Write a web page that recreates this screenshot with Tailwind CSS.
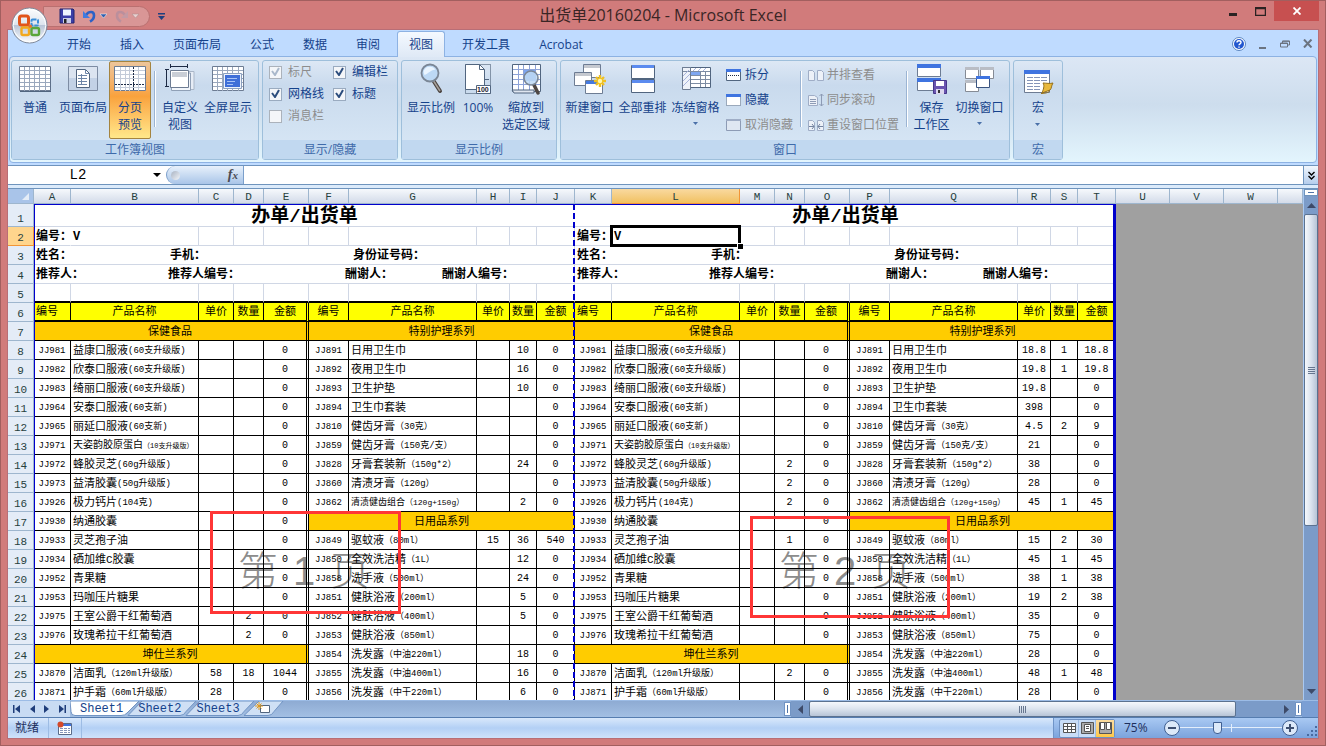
<!DOCTYPE html>
<html lang="zh-CN">
<head>
    <meta charset="UTF-8">
    <meta name="viewport" content="width=device-width, initial-scale=1.0">
    <title>出货单20160204 - Microsoft Excel</title>
    <script src="https://cdn.jsdelivr.net/npm/@tailwindcss/browser@4"></script>
</head>
<body class="h-screen overflow-hidden font-['Open_Sans','Noto_Sans_CJK_SC',sans-serif] text-xs text-[#15428b]">
<div class="h-full flex flex-col bg-[#d17b7b] border border-[#a25f5f] px-[6px] pb-[6px]">

    <!-- Title bar -->
    <header class="relative h-[28px] shrink-0 flex items-center">
        <div class="absolute left-[36px] top-[5px] w-[107px] h-[21px] rounded-r-full bg-[#d99696] border border-[#b97070]"></div>
        <div class="relative flex items-center pl-[52px] pt-[2px]">
            <button aria-label="保存" class="w-[16px] mr-[7px]"><svg width="16" height="16" viewBox="0 0 16 16"><path d="M1 1h13l1 1v13H1z" fill="#3b3fa8" stroke="#23256f"/><path d="M4 1.500h8v6H4z" fill="#eef4ff"/><path d="M4 10h8v5H4z" fill="#c9cde8"/><path d="M5 11h2.500v4H5z" fill="#222"/></svg></button>
            <button aria-label="撤消" class="w-[16px] mr-[2px]"><svg width="16" height="16" viewBox="0 0 16 16"><path d="M4 7C7 3 12 3 12 7.500c0 3-2 5-4 6" fill="none" stroke="#2d62c6" stroke-width="2.600"/><path d="M1 3v7h7z" fill="#3f7be0"/></svg></button>
            <button aria-label="撤消列表" class="w-[7px] mr-[6px]"><svg width="7" height="6" viewBox="0 0 7 6"><path d="M0 1h7L3.500 5z" fill="#2f5fae" stroke="#fff" stroke-width=".5"/></svg></button>
            <button aria-label="重复" class="w-[16px] mr-[3px]"><svg width="16" height="16" viewBox="0 0 16 16"><path d="M12 7C9 3 4 3 4 7.500c0 3 2 5 4 6" fill="none" stroke="#bb8f9c" stroke-width="2.600"/><path d="M15 3v7H8z" fill="#c39aa4"/></svg></button>
            <button aria-label="重复列表" class="w-[7px] mr-[19px]"><svg width="7" height="6" viewBox="0 0 7 6"><path d="M0 1h7L3.500 5z" fill="#e8d0d0" stroke="#a88" stroke-width=".5"/></svg></button>
            <button aria-label="自定义快速访问工具栏" class="w-[7px]"><svg width="7" height="9" viewBox="0 0 7 9"><path d="M0 1h7v1.500H0zM0 4h7L3.500 8z" fill="#1f3f7f"/></svg></button>
        </div>
        <h1 class="absolute inset-x-0 text-center text-[16px] leading-[28px] text-[#3a2525] pointer-events-none">出货单20160204 - Microsoft Excel</h1>
        <div class="ml-auto self-start flex items-center h-[20px]">
            <button aria-label="最小化" class="w-[27px] h-[20px] flex justify-center items-center"><svg width="9" height="12"><path d="M0 8h8v3H0z" fill="#2a2222"/></svg></button>
            <button aria-label="最大化" class="w-[27px] h-[20px] flex justify-center items-center"><svg width="11" height="9"><path d="M.5 1.500h10v7H.5zM0 .5h11" fill="none" stroke="#2a2222" stroke-width="1.500"/></svg></button>
            <button aria-label="关闭" class="w-[45px] h-[20px] flex justify-center items-center bg-[#c75050]"><svg width="8" height="8"><path d="M.5.5l7 7m0-7l-7 7" stroke="#fff" stroke-width="1.800"/></svg></button>
        </div>
        <button aria-label="Office 按钮" class="absolute left-[4px] top-[6px] z-20 w-[37px] h-[37px]">
            <svg width="37" height="37" viewBox="0 0 37 37"><defs><linearGradient id="orb" x2="0" y2="1"><stop offset="0" stop-color="#fdfdfd"/><stop offset=".48" stop-color="#dde4ee"/><stop offset=".5" stop-color="#b9c5d8"/><stop offset="1" stop-color="#fdfeff"/></linearGradient></defs><circle cx="18.500" cy="18.500" r="17.500" fill="url(#orb)" stroke="#7d8798" stroke-width="1"/><circle cx="18.500" cy="18.500" r="16.300" fill="none" stroke="#fff"/>
            <g fill="none"><rect x="8.500" y="9" width="9" height="9" rx="2" stroke="#e2541a" stroke-width="3"/><rect x="20.500" y="12.500" width="6.500" height="6" rx="1" stroke="#3b8ed8" stroke-width="2" stroke-dasharray="4 1"/><rect x="10.500" y="20.500" width="7.500" height="7.500" rx="1.500" stroke="#f2a81d" stroke-width="2.400"/><rect x="20.500" y="21" width="7.500" height="7" rx="1.500" stroke="#5aa63a" stroke-width="2.400"/></g><circle cx="19.200" cy="19.300" r="1.800" fill="#e8732a"/></svg>
        </button>
    </header>

    <main class="flex-1 min-h-0 flex flex-col border border-[#b86e76] bg-[#bfdbff]">
        <!-- Ribbon tabs -->
        <nav class="h-[27px] -mb-px relative z-10 shrink-0 flex items-end pl-[47px] gap-[5px] leading-[25px]">
            <a href="#" class="px-[12px]">开始</a>
            <a href="#" class="px-[12px]">插入</a>
            <a href="#" class="px-[12px]">页面布局</a>
            <a href="#" class="px-[12px]">公式</a>
            <a href="#" class="px-[12px]">数据</a>
            <a href="#" class="px-[12px]">审阅</a>
            <a href="#" class="px-[11px] rounded-t-[3px] border border-b-0 border-[#8db2e3] bg-linear-to-b from-[#f4f9ff] to-[#dfe9f6]">视图</a>
            <a href="#" class="px-[12px]">开发工具</a>
            <a href="#" class="px-[12px]">Acrobat</a>
            <div class="ml-auto self-center flex items-center gap-[13px] pr-[5px]">
                <button aria-label="帮助"><svg width="14" height="14" viewBox="0 0 14 14"><circle cx="7" cy="7" r="6.500" fill="#fff" stroke="#5b86c0"/><circle cx="7" cy="7" r="5" fill="#2257cf"/><path d="M5 5.500C5 3.200 9 3.200 9 5.500 9 7 7 6.800 7 8.300M7 9.500v1.300" fill="none" stroke="#fff" stroke-width="1.400"/></svg></button>
                <button aria-label="最小化工作簿"><svg width="8" height="10"><path d="M0 8h7v2H0z" fill="#6b7380"/></svg></button>
                <button aria-label="还原工作簿"><svg width="10" height="8"><path d="M2.500 3V1h7v4H7.500M.5 3h7v4h-7zM.5 3.500h7M2.500 1.300h7" fill="none" stroke="#6b7380"/></svg></button>
                <button aria-label="关闭工作簿"><svg width="10" height="9"><path d="M1 .5l7.500 8M8.500.5L1 8.500" stroke="#6b7380" stroke-width="2"/></svg></button>
            </div>
        </nav>

        <!-- Ribbon -->
        <section class="mx-px shrink-0 h-[107px] flex gap-[3px] items-start pl-px pt-[3px] rounded border border-[#8db2e3] bg-linear-to-b from-[#dce7f5] via-[#cddded] via-45% to-[#e3f5fd]">
            <div class="w-[248px] h-[100px] flex flex-col rounded-[3px] border border-[#9ebfdb] bg-linear-to-b from-[#dde8f5] via-[#c9daed] via-25% to-[#d9e8f6]">
                <div class="flex-1 flex items-start pl-px leading-[17px]">
                    <button class="w-[44px] flex flex-col items-center gap-[4px] pt-[2px]">
                        <svg width="32" height="32" viewBox="0 0 32 32"><path d="M.5 3.500h31v24H.5z" fill="#fff" stroke="#6d7c93"/><path d="M1 7.500h30M1 11.500h30M1 15.500h30M1 19.500h30M1 23.500h30M5.500 4v24M10.500 4v24M15.500 4v24M20.500 4v24M26.500 4v24" stroke="#9aa8bd"/><path d="M1 28.500h31V4" stroke="#51657f" fill="none"/></svg>
                        <span>普通</span>
                    </button>
                    <button class="w-[52px] flex flex-col items-center gap-[4px] pt-[2px]">
                        <svg width="32" height="32" viewBox="0 0 32 32"><path d="M1.500 3.500h29v24h-29z" fill="#dbe4f0" stroke="#7d8ca3"/><path d="M2 15h28v12H2z" fill="#c3d2e6"/><path d="M9.500 6.500h9l4 4v14h-13z" fill="#fff" stroke="#51657f"/><path d="M18.500 6.500v4h4M11 12.500h9M11 15.500h9M11 18.500h9M11 21.500h9M14.500 11v11" stroke="#6e86a8" fill="none"/></svg>
                        <span class="whitespace-nowrap">页面布局</span>
                    </button>
                    <button class="w-[42px] h-[78px] flex flex-col items-center gap-[4px] pt-px border border-[#a5843f] rounded-[2px] bg-linear-to-b from-[#ecc59a] via-[#f9a23c] via-45% to-[#ffe88a]">
                        <svg width="32" height="32" viewBox="0 0 32 32" class="shrink-0"><path d="M.5 3.500h31v24H.5z" fill="#fff" stroke="#6d7c93"/><path d="M1 7.500h30M1 11.500h30M1 15.500h30M1 24.500h30M6.500 4v24M11.500 4v24M15.500 4v24M24.500 4v24" stroke="#c3cbd8"/><path d="M19.500 4v24M1 21.500h30" stroke="#1d2b45" stroke-dasharray="2 1"/></svg>
                        <span>分页<br>预览</span>
                    </button>
                    <div class="w-[2px] h-[56px] mt-[10px] mx-[3px] bg-[#9bb4d3] border-r border-white"></div>
                    <button class="w-[42px] flex flex-col items-center gap-[4px] pt-[2px]">
                        <svg width="32" height="32" viewBox="0 0 32 32"><path d="M9 8.500h21v18H9z" fill="#e7edf6" stroke="#a9b6c8"/><path d="M7.500 10h19v17.500h-19z" fill="#f2f6fb" stroke="#90a0b6"/><path d="M6.500 7.500h18v17h-18z" fill="#fff" stroke="#6d7c93"/><path d="M8 9h15v5H8z" fill="#c9ced6"/><path d="M6 3.500h18M6.500 1v4M23.500 1v4M2.500 6v18M1 6.500h4M1 23.500h4" stroke="#1d2b45" fill="none"/></svg>
                        <span class="whitespace-nowrap">自定义<br>视图</span>
                    </button>
                    <button class="w-[54px] flex flex-col items-center gap-[4px] pt-[2px]">
                        <svg width="32" height="32" viewBox="0 0 32 32"><path d="M.5 3.500h31v24H.5z" fill="#fff" stroke="#6d7c93"/><path d="M1 7.500h30M1 11.500h30M1 15.500h30M1 19.500h30M1 23.500h30M5.500 4v24M10.500 4v24M15.500 4v24M20.500 4v24M26.500 4v24" stroke="#9aa8bd"/><path d="M11.500 10.500h18v15h-18z" fill="#eef3fb" stroke="#8ba0bf"/><path d="M13 12h15v12H13z" fill="#3f6fd8"/><path d="M15 15.500h10M15 18.500h8M15 21.500h6" stroke="#a9c4f7"/></svg>
                        <span class="whitespace-nowrap">全屏显示</span>
                    </button>
                </div>
                <div class="h-[19px] leading-[19px] text-center bg-[#c1d8f0] text-[#3e6aaa]">工作簿视图</div>
            </div>

            <div class="w-[136px] h-[100px] flex flex-col rounded-[3px] border border-[#9ebfdb] bg-linear-to-b from-[#dde8f5] via-[#c9daed] via-25% to-[#d9e8f6]">
                <div class="flex-1 grid grid-cols-[64px_1fr] auto-rows-[22px] pl-[6px]">
                    <label class="relative flex items-center gap-[6px] text-[#8d8d8d]"><input type="checkbox" checked disabled class="peer appearance-none w-[13px] h-[13px] border border-[#abb2bb] bg-[#f4f6f9]"><svg class="absolute left-[2px] top-[6px] hidden peer-checked:block" width="9" height="9"><path d="M1 4l3 4 4-7" fill="none" stroke="#a9b8cb" stroke-width="2"/></svg>标尺</label>
                    <label class="relative flex items-center gap-[6px]"><input type="checkbox" checked class="peer appearance-none w-[13px] h-[13px] border border-[#9aabc0] bg-[#f4f6f9]"><svg class="absolute left-[2px] top-[6px] hidden peer-checked:block" width="9" height="9"><path d="M1 4l3 4 4-7" fill="none" stroke="#2c4d7d" stroke-width="2"/></svg>编辑栏</label>
                    <label class="relative flex items-center gap-[6px]"><input type="checkbox" checked class="peer appearance-none w-[13px] h-[13px] border border-[#9aabc0] bg-[#f4f6f9]"><svg class="absolute left-[2px] top-[6px] hidden peer-checked:block" width="9" height="9"><path d="M1 4l3 4 4-7" fill="none" stroke="#2c4d7d" stroke-width="2"/></svg>网格线</label>
                    <label class="relative flex items-center gap-[6px]"><input type="checkbox" checked class="peer appearance-none w-[13px] h-[13px] border border-[#9aabc0] bg-[#f4f6f9]"><svg class="absolute left-[2px] top-[6px] hidden peer-checked:block" width="9" height="9"><path d="M1 4l3 4 4-7" fill="none" stroke="#2c4d7d" stroke-width="2"/></svg>标题</label>
                    <label class="relative flex items-center gap-[6px] text-[#8d8d8d]"><input type="checkbox" disabled class="appearance-none w-[13px] h-[13px] border border-[#abb2bb] bg-[#f4f6f9]">消息栏</label>
                </div>
                <div class="h-[19px] leading-[19px] text-center bg-[#c1d8f0] text-[#3e6aaa]">显示/隐藏</div>
            </div>

            <div class="w-[156px] h-[100px] flex flex-col rounded-[3px] border border-[#9ebfdb] bg-linear-to-b from-[#dde8f5] via-[#c9daed] via-25% to-[#d9e8f6]">
                <div class="flex-1 flex items-start pl-px leading-[17px]">
                    <button class="w-[56px] flex flex-col items-center gap-[4px] pt-[2px]">
                        <svg width="32" height="32" viewBox="0 0 32 32"><path d="M18 17l7 11" stroke="#4d4642" stroke-width="4" stroke-linecap="round"/><path d="M18 17l7 11" stroke="#a8a29c" stroke-width="1.500"/><circle cx="15" cy="10" r="8.500" fill="#bdd9f5" stroke="#7b8796" stroke-width="1.800"/><path d="M8.500 9a6.500 6.500 0 0 1 12-2c-4-1-7 4-11 5z" fill="#eaf5ff"/></svg>
                        <span>显示比例</span>
                    </button>
                    <button class="w-[38px] flex flex-col items-center gap-[4px] pt-[2px]">
                        <svg width="32" height="32" viewBox="0 0 32 32"><path d="M3.500 1.500h25v29h-25z" fill="none" stroke="#33465f" stroke-dasharray="1 1"/><path d="M3.500 1.500h14l5 5v20h-19z" fill="#fff" stroke="#51657f"/><path d="M17.500 1.500v5h5M23 16.500h4" fill="none" stroke="#51657f"/><path d="M14.500 22.500h14v8h-14z" fill="#fff" stroke="#51657f"/><text x="15" y="29" font-size="7" font-weight="bold" font-family="Liberation Sans" fill="#223">100</text></svg>
                        <span>100%</span>
                    </button>
                    <button class="w-[58px] flex flex-col items-center gap-[4px] pt-[2px]">
                        <svg width="32" height="32" viewBox="0 0 32 32"><path d="M2.500 1.500h28v27h-28z" fill="#fff" stroke="#51657f"/><path d="M14 7h11v11H14z" fill="#7ea6f0"/><path d="M3 6.500h27M3 11.500h27M3 16.500h27M3 21.500h27M8.500 2v26M13.500 2v26M19.500 2v26M25.500 2v26" stroke="#8da3d8"/><path d="M2 27h22v3H4z" fill="#dfe6f0" stroke="#51657f"/><path d="M24 22l4 8" stroke="#4d4642" stroke-width="3.500" stroke-linecap="round"/><circle cx="21" cy="15" r="7" fill="#bdd9f5" fill-opacity=".85" stroke="#7b8796" stroke-width="1.600"/></svg>
                        <span>缩放到<br>选定区域</span>
                    </button>
                </div>
                <div class="h-[19px] leading-[19px] text-center bg-[#c1d8f0] text-[#3e6aaa]">显示比例</div>
            </div>

            <div class="w-[450px] h-[100px] flex flex-col rounded-[3px] border border-[#9ebfdb] bg-linear-to-b from-[#dde8f5] via-[#c9daed] via-25% to-[#d9e8f6]">
                <div class="flex-1 flex items-start pl-[2px] leading-[17px]">
                    <button class="w-[53px] flex flex-col items-center gap-[4px] pt-[2px]">
                        <svg width="32" height="32" viewBox="0 0 32 32"><g fill="#fff" stroke="#6d7c93"><path d="M9.500 1.500h17v13h-17z"/><path d="M.5 9.500h17v13H.5z"/><path d="M11.500 17.500h17v13h-17z"/></g><path d="M10 2h16v3H10zM1 10h16v3H1z" fill="#c5c9d0"/><path d="M12 18h16v3H12z" fill="#4579e0"/><path d="M26 12v12M20 18h12M22 14l8 8M30 14l-8 8" stroke="#f0c020" stroke-width="2.400"/><circle cx="26" cy="18" r="2.200" fill="#fff7b0"/></svg>
                        <span>新建窗口</span>
                    </button>
                    <button class="w-[53px] flex flex-col items-center gap-[4px] pt-[2px]">
                        <svg width="32" height="32" viewBox="0 0 32 32"><path d="M4.500 2.500h23v13h-23zM4.500 16.500h23v13h-23z" fill="#fff" stroke="#51657f"/><path d="M5 2h22v3H5zM5 17h22v3H5z" fill="#5b8bef"/></svg>
                        <span>全部重排</span>
                    </button>
                    <button class="w-[53px] flex flex-col items-center gap-[4px] pt-[2px]">
                        <svg width="32" height="32" viewBox="0 0 32 32"><path d="M2.500 4.500h28v20h-28z" fill="#fff" stroke="#51657f"/><path d="M2.500 4.500h8v22h-8z" fill="#eef2f9" stroke="#6d7c93"/><path d="M11 9h10v4H11z" fill="#7ea6f0"/><path d="M3 8.500h27M11 12.500h19M11 16.500h19M11 20.500h19M20.500 9v15M25.500 9v15" stroke="#7d8ca3"/><path d="M3 13l6-6M3 18l7-7M3 23l7-7M13 8l3-3M18 8l3-3M23 8l3-3" stroke="#a7b3dd"/></svg>
                        <span class="flex flex-col items-center">冻结窗格<svg class="mt-[6px]" width="5" height="4"><path d="M0 0h5L2.500 3z" fill="#4a70a8"/></svg></span>
                    </button>
                    <div class="w-[76px] grid auto-rows-[25px] pt-px pl-[4px]">
                        <button class="flex items-center gap-[3px] whitespace-nowrap"><svg width="16" height="14"><path d="M.5 1.500h14v11H.5z" fill="#fff" stroke="#51657f"/><path d="M0 1h15v3H0z" fill="#3f74e0"/><path d="M2 7.500h12" stroke="#1d2b45" stroke-dasharray="1 1"/></svg>拆分</button>
                        <button class="flex items-center gap-[3px] whitespace-nowrap"><svg width="16" height="14"><path d="M.5 1.500h14v11H.5z" fill="#fff" stroke="#51657f" stroke-dasharray="1 1"/><path d="M0 1h15v3H0z" fill="#3f74e0"/></svg>隐藏</button>
                        <button class="flex items-center gap-[3px] whitespace-nowrap text-[#8d8d8d]"><svg width="16" height="14"><path d="M.5 1.500h14v11H.5z" fill="#dfe7f2" stroke="#8d9bb5"/><path d="M0 1h15v2H0z" fill="#9fadc6"/></svg>取消隐藏</button>
                    </div>
                    <div class="w-[2px] h-[56px] mt-[10px] mx-[2px] bg-[#9bb4d3] border-r border-white"></div>
                    <div class="w-[100px] grid auto-rows-[25px] pt-px pl-[4px]">
                        <button class="flex items-center gap-[3px] whitespace-nowrap text-[#8d8d8d]"><svg width="16" height="14"><path d="M.5 2.500h4l2 2v8h-6zM9.500 2.500h4l2 2v8h-6z" fill="#edf1f8" stroke="#9fadc6"/></svg>并排查看</button>
                        <button class="flex items-center gap-[3px] whitespace-nowrap text-[#8d8d8d]"><svg width="16" height="14"><path d="M.5 2.500h6l3 2v8h-9z" fill="#edf1f8" stroke="#9fadc6"/><path d="M2 6.500h6M2 8.500h6M2 10.500h6M13.500 1v12M11.500 3l2-2 2 2M11.500 11l2 2 2-2" fill="none" stroke="#8d9bb5"/></svg>同步滚动</button>
                        <button class="flex items-center gap-[3px] whitespace-nowrap text-[#8d8d8d]"><svg width="16" height="14"><path d="M.5 2.500h4l2 2v8h-6zM9.500 2.500h4l2 2v8h-6z" fill="#edf1f8" stroke="#9fadc6"/><path d="M1 8.500h5M4 6l2 2.500L4 11M15 8.500h-5M12 6l-2 2.500 2 2.500" fill="none" stroke="#7383a0"/></svg>重设窗口位置</button>
                    </div>
                    <div class="w-[2px] h-[56px] mt-[10px] mx-[2px] bg-[#9bb4d3] border-r border-white"></div>
                    <button class="w-[43px] flex flex-col items-center gap-[4px] pt-[2px]">
                        <svg width="32" height="32" viewBox="0 0 32 32"><path d="M1.500 1.500h23v12h-23zM1.500 15.500h23v12h-23z" fill="#fff" stroke="#6d7c93"/><path d="M1 1h24v4H1zM1 15h24v4H1z" fill="#3f74e0"/><path d="M17.500 17.500h13v13h-13z" fill="#6b55b0" stroke="#46378a"/><path d="M20 18h8v5h-8z" fill="#fff"/><path d="M20 26h8v5h-8z" fill="#ddd8ef"/><path d="M22 27h2v3h-2z" fill="#333"/></svg>
                        <span class="whitespace-nowrap">保存<br>工作区</span>
                    </button>
                    <button class="w-[53px] flex flex-col items-center gap-[4px] pt-[2px]">
                        <svg width="32" height="32" viewBox="0 0 32 32"><g fill="#fff" stroke="#858b95"><path d="M1.500 4.500h13v11h-13zM16.500 4.500h13v11h-13zM1.500 17.500h13v11h-13z"/></g><path d="M1 4h14v3H1zM16 4h14v3H16zM1 17h14v3H1z" fill="#b9bdc5"/><path d="M12.500 13.500h13v11h-13z" fill="#fff" stroke="#3a5480"/><path d="M12 13h14v3H12z" fill="#3f74e0"/></svg>
                        <span class="flex flex-col items-center whitespace-nowrap">切换窗口<svg class="mt-[6px]" width="5" height="4"><path d="M0 0h5L2.500 3z" fill="#4a70a8"/></svg></span>
                    </button>
                </div>
                <div class="h-[19px] leading-[19px] text-center bg-[#c1d8f0] text-[#3e6aaa]">窗口</div>
            </div>

            <div class="w-[50px] h-[100px] flex flex-col rounded-[3px] border border-[#9ebfdb] bg-linear-to-b from-[#dde8f5] via-[#c9daed] via-25% to-[#d9e8f6]">
                <button class="flex-1 flex flex-col items-center gap-[4px] pt-[2px] leading-[17px]">
                    <svg width="32" height="32" viewBox="0 0 32 32"><path d="M2.500 7.500h25v22h-25z" fill="#fff" stroke="#6d7c93"/><path d="M2 7h26v4H2z" fill="#3f74e0"/><path d="M5 14.500h6M12 14.500h6M19 14.500h6M5 17.500h6M12 17.500h6M19 17.500h6M5 20.500h6M12 20.500h6M5 23.500h6M12 23.500h6M5 26.500h6M12 26.500h6" stroke="#8494b8"/><path d="M21 20c3 0 7 1 10 0-2 3-1 5-3 7l-8 3c1-3 3-7 1-10z" fill="#e9b93d" stroke="#94701b"/><path d="M19 30.500c3 0 6 0 9-3" fill="none" stroke="#94701b"/></svg>
                    <span class="flex flex-col items-center">宏<svg class="mt-[7px]" width="5" height="4"><path d="M0 0h5L2.500 3z" fill="#4a70a8"/></svg></span>
                </button>
                <div class="h-[19px] leading-[19px] text-center bg-[#c1d8f0] text-[#3e6aaa]">宏</div>
            </div>
        </section>

        <!-- Formula bar -->
        <div class="shrink-0 mt-[2px] h-[20px] flex bg-white border-y border-[#6f94bd] text-black">
            <input aria-label="名称框" value="L2" class="w-[140px] text-center font-['Liberation_Mono',monospace] text-[14px] outline-none">
            <button aria-label="名称列表" class="w-[18px] flex justify-center items-center"><svg width="8" height="5"><path d="M0 0h8L4 4z"/></svg></button>
            <div class="w-[78px] flex items-center justify-between pl-[4px] pr-[5px] rounded-l-full border border-y-0 border-[#7b9fcb] bg-linear-to-b from-[#e8f1fb] to-[#a9c5e8]">
                <span class="w-[9px] h-[9px] rounded-full bg-linear-to-br from-[#a9b3c2] to-[#f3f6fa]"></span>
                <button class="font-['Liberation_Serif',serif] italic font-bold text-[14px] leading-[18px] text-[#4b4b55]">f<span class="text-[11px]">x</span></button>
            </div>
            <input aria-label="编辑栏" class="flex-1 outline-none">
            <button aria-label="展开编辑栏" class="w-[15px] flex justify-center items-center border-l border-[#6f94bd] bg-linear-to-b from-[#f2f7fd] to-[#b5cdec]"><svg width="7" height="9"><path d="M.5 1l3 3 3-3M.5 5l3 3 3-3" fill="none" stroke="#000" stroke-width="1.400"/></svg></button>
        </div>
        <div class="shrink-0 h-[4px] bg-[#dcebfb] border-b border-[#6f94bd]"></div>

        <!-- Worksheet -->
        <div class="flex-1 min-h-0 flex bg-[#a0a0a0]">
            <div class="relative flex-1 overflow-hidden">
                <div class="absolute left-[26px] top-[15px] w-[1082px] bottom-0 bg-white"></div>
                <div class="absolute left-[230px] top-[352px] flex gap-[15px] leading-[60px] text-[40px] text-[#8c8c8c] font-light font-['Liberation_Sans','Noto_Sans_CJK_SC',sans-serif]"><span>第</span><span>1</span><span>页</span></div>
                <div class="absolute left-[771px] top-[352px] flex gap-[15px] leading-[60px] text-[40px] text-[#8c8c8c] font-light font-['Liberation_Sans','Noto_Sans_CJK_SC',sans-serif]"><span>第</span><span>2</span><span>页</span></div>
                <table class="relative table-fixed w-full border-separate border-spacing-0 whitespace-nowrap text-black text-[11px] font-['Liberation_Mono','Noto_Sans_CJK_SC',monospace]">
                    <colgroup id="cols"></colgroup>
                    <thead><tr id="letters"></tr></thead>
                    <tbody id="cells"></tbody>
                </table>
                <!-- print area edge and page break -->
                <div class="absolute left-[26px] top-[15px] w-[1082px] bottom-0 border-t border-l border-r-[3px] border-[#0000cc]"></div>
                <div class="absolute left-[565px] top-[15px] bottom-0 w-[2px] bg-[repeating-linear-gradient(#0000cc_0_6px,transparent_6px_9px)]"></div>
                <!-- active cell -->
                <div class="absolute left-[602px] top-[36px] w-[131px] h-[22px] border-[3px] border-black"></div>
                <div class="absolute left-[729px] top-[54px] w-[6px] h-[6px] bg-black border-t border-l border-white"></div>
                <div class="absolute left-[202px] top-[322px] w-[191px] h-[103px] border-[3px] border-[#ff3636]"></div>
                <div class="absolute left-[742px] top-[327px] w-[200px] h-[102px] border-[3px] border-[#ff3636]"></div>
            </div>
            <div class="w-[15px] flex flex-col border-l border-[#a9c8f0] bg-[#7b9bc8]">
                <div class="h-[7px] mb-px bg-white border border-[#6f94bd]"><div class="mt-[2px] mx-[3px] h-px bg-[#4f74a8]"></div></div>
                <button aria-label="向上滚动" class="h-[17px] flex justify-center items-center"><svg width="9" height="5"><path d="M0 5h9L4.500 0z" fill="#3d4a68"/></svg></button>
                <div class="h-[312px] flex flex-col justify-center items-center gap-px rounded-[2px] border border-[#5b7290] bg-linear-to-r from-[#f5f8fc] via-[#dbe3ee] to-[#b7c4d6]">
                    <span class="w-[7px] h-px bg-[#66768f]"></span><span class="w-[7px] h-px bg-[#66768f]"></span><span class="w-[7px] h-px bg-[#66768f]"></span><span class="w-[7px] h-px bg-[#66768f]"></span>
                </div>
                <button aria-label="向下滚动" class="mt-auto h-[17px] flex justify-center items-center"><svg width="9" height="5"><path d="M0 0h9L4.500 5z" fill="#3d4a68"/></svg></button>
            </div>
        </div>

        <!-- Sheet tabs and horizontal scroll bar -->
        <div class="shrink-0 h-[17px] flex border-t border-[#9cbce6] bg-linear-to-b from-[#8eabd3] to-[#a3bfe3]">
            <div class="w-[776px] relative flex items-stretch">
                <div class="w-[62px] flex justify-around items-center bg-[#c8dbf3]">
                    <button aria-label="第一张"><svg width="8" height="8"><path d="M0 0h1.500v8H0zM7 0v8L2 4z" fill="#1f3d7a"/></svg></button>
                    <button aria-label="上一张"><svg width="5" height="8"><path d="M5 0v8L0 4z" fill="#1f3d7a"/></svg></button>
                    <button aria-label="下一张"><svg width="5" height="8"><path d="M0 0v8l5-4z" fill="#1f3d7a"/></svg></button>
                    <button aria-label="最后一张"><svg width="8" height="8"><path d="M6.500 0H8v8H6.500zM1 0v8l5-4z" fill="#1f3d7a"/></svg></button>
                </div>
                <svg class="absolute left-[62px] top-0" width="220" height="15" viewBox="0 0 220 15"><g fill="#cfe0f5" stroke="#7194c4"><path d="M174 14.500h24q4 0 6-4L213 0h-24z"/><path d="M116 14.500h52q4 0 6-4L184 0h-54z"/><path d="M58 14.500h52q4 0 6-4L126 0H72z"/></g><path d="M0 0h69L57 12q-2 2.500-6 2.500H5q-4 0-4-4z" fill="#fff" stroke="#7194c4"/><path d="M190.500 4.500h9v7h-9z" fill="#fff" stroke="#51657f"/><path d="M189 1v8M185 5h8M186.500 2.500l5 5M191.500 2.500l-5 5" stroke="#e09a20"/></svg>
                <div class="relative pl-[10px] flex gap-[15px] leading-[16px] font-['Liberation_Mono',monospace]">
                    <a href="#">Sheet1</a><a href="#">Sheet2</a><a href="#">Sheet3</a>
                </div>
            </div>
            <div class="w-[7px] my-px bg-white border border-[#7194c4] flex justify-center items-center"><i class="w-px h-[8px] bg-[#4f74a8]"></i></div>
            <button aria-label="向左滚动" class="w-[18px] flex justify-center items-center bg-[#7b9bc8]"><svg width="5" height="9"><path d="M5 0v9L0 4.500z" fill="#3d4a68"/></svg></button>
            <div class="flex-1 flex bg-[#7b9bc8]">
                <div class="w-[427px] flex justify-center items-center gap-px rounded-[2px] border border-[#5b7290] bg-linear-to-b from-[#f5f8fc] via-[#dbe3ee] to-[#b7c4d6]">
                    <span class="w-px h-[7px] bg-[#66768f]"></span><span class="w-px h-[7px] bg-[#66768f]"></span><span class="w-px h-[7px] bg-[#66768f]"></span><span class="w-px h-[7px] bg-[#66768f]"></span>
                </div>
            </div>
            <button aria-label="向右滚动" class="w-[18px] flex justify-center items-center bg-[#7b9bc8]"><svg width="5" height="9"><path d="M0 0v9l5-4.500z" fill="#3d4a68"/></svg></button>
            <div class="w-[7px] my-px bg-white border border-[#7194c4] flex justify-center items-center"><i class="w-px h-[8px] bg-[#4f74a8]"></i></div>
            <div class="w-[16px] bg-[#7b9fd4]"></div>
        </div>

        <!-- Status bar -->
        <footer class="shrink-0 h-[21px] flex items-center border-t border-[#567db0] bg-linear-to-b from-[#d9e8fb] via-[#b3d0f5] via-50% to-[#cfe2fa] text-[#1e2f5c]">
            <span class="w-[40px] pl-[7px]">就绪</span>
            <span class="w-[34px] h-full flex justify-center items-center border-x border-[#9dbce4]"><svg width="16" height="15"><path d="M1.500 2.500h13v11h-13z" fill="#fff" stroke="#5a6b88"/><path d="M2 3h12v2H2z" fill="#3f74e0"/><path d="M3 7.500h10M3 9.500h10M3 11.500h10" stroke="#8494b8" stroke-dasharray="3 1"/><circle cx="3.500" cy="3.500" r="3" fill="#d4492a"/></svg></span>
            <div class="ml-auto h-full flex items-center pl-[5px] border-l border-[#6f94c8] bg-linear-to-b from-[#a9c9f3] to-[#7ba3dc]">
                <div class="flex rounded-[2px] border border-[#6d90c2] bg-[#c9ddf6]">
                    <button aria-label="普通" class="w-[18px] h-[17px] flex justify-center items-center"><svg width="13" height="10"><path d="M.5.5h12v9H.5zM0 3.500h13M0 6.500h13M4.500 0v10M8.500 0v10" fill="#fff" stroke="#555"/></svg></button>
                    <button aria-label="页面布局" class="w-[18px] h-[17px] flex justify-center items-center border-x border-[#9dbce4]"><svg width="13" height="12"><path d="M.5.5h12v11H.5z" fill="#aaa" stroke="#555"/><path d="M3.500 2.500h6v7h-6zM5 4.500h3M5 6.500h3" fill="#fff" stroke="#555"/></svg></button>
                    <button aria-label="分页预览" class="w-[18px] h-[17px] flex justify-center items-center bg-linear-to-b from-[#fbdca0] to-[#ffc844]"><svg width="13" height="12"><path d="M.5.5h12v11H.5z" fill="#aaa" stroke="#555"/><path d="M1.500.5h4v7h-4zM7.500.5h4v7h-4z" fill="#fff" stroke="#555"/></svg></button>
                </div>
                <span class="w-[49px] pl-[9px]">75%</span>
                <button aria-label="缩小"><svg width="16" height="16"><circle cx="8" cy="8" r="7.500" fill="#dce9f9" stroke="#3f5f92"/><path d="M4 8h8" stroke="#3d4f70" stroke-width="2"/></svg></button>
                <div class="relative w-[102px] h-[16px] flex items-center">
                    <div class="absolute inset-x-0 top-[7px] h-px bg-[#e3eefb]"></div>
                    <div class="absolute left-[51px] top-[4px] w-px h-[8px] bg-[#e3eefb]"></div>
                    <input type="range" aria-label="显示比例" min="0" max="100" value="36" class="relative w-full h-[16px] appearance-none bg-transparent [&::-webkit-slider-thumb]:appearance-none [&::-webkit-slider-thumb]:w-[9px] [&::-webkit-slider-thumb]:h-[12px] [&::-webkit-slider-thumb]:rounded-b-[4px] [&::-webkit-slider-thumb]:border [&::-webkit-slider-thumb]:border-[#3f5f92] [&::-webkit-slider-thumb]:bg-[#dce9f9]">
                </div>
                <button aria-label="放大"><svg width="16" height="16"><circle cx="8" cy="8" r="7.500" fill="#dce9f9" stroke="#3f5f92"/><path d="M4 8h8M8 4v8" stroke="#3d4f70" stroke-width="2"/></svg></button>
                <svg class="ml-[9px] mt-[6px]" width="11" height="11"><path d="M8 0h2v2H8zM4 4h2v2H4zM8 4h2v2H8zM0 8h2v2H0zM4 8h2v2H4zM8 8h2v2H8z" fill="#4a6ba0"/></svg>
            </div>
        </footer>
    </main>
</div>

<script>
    var pageWidths = [37, 128, 35, 30, 45, 40, 128, 33, 27, 38];
    var widths = [26].concat(pageWidths, pageWidths, [54, 54, 54]);

    // [code, name, note, page 1: price, qty, amount, page 2: price, qty, amount]; a plain string is a section band
    var leftRows = [
        ['JJ981', '益康口服液', '(60支升级版)', '', '', 0, '', '', 0],
        ['JJ982', '欣泰口服液', '(60支升级版)', '', '', 0, '', '', 0],
        ['JJ983', '绮丽口服液', '(60支升级版)', '', '', 0, '', '', 0],
        ['JJ964', '安泰口服液', '(60支新)', '', '', 0, '', '', 0],
        ['JJ965', '丽延口服液', '(60支新)', '', '', 0, '', '', 0],
        ['JJ971', '天姿韵胶原蛋白', '（10支升级版）', '', '', 0, '', '', 0],
        ['JJ972', '蜂胶灵芝', '(60g升级版)', '', '', 0, '', 2, 0],
        ['JJ973', '益清胶囊', '(50g升级版)', '', '', 0, '', 2, 0],
        ['JJ926', '极力钙片', '(104克)', '', '', 0, '', 2, 0],
        ['JJ930', '纳通胶囊', '', '', '', 0, '', '', 0],
        ['JJ933', '灵芝孢子油', '', '', '', 0, '', 1, 0],
        ['JJ934', '硒加维C胶囊', '', '', '', 0, '', '', 0],
        ['JJ952', '青果糖', '', '', '', 0, '', '', 0],
        ['JJ953', '玛咖压片糖果', '', '', '', 0, '', '', 0],
        ['JJ975', '王室公爵干红葡萄酒', '', '', 2, 0, '', '', 0],
        ['JJ976', '玫瑰希拉干红葡萄酒', '', '', 2, 0, '', '', 0],
        '坤仕兰系列',
        ['JJ870', '洁面乳', '（120ml升级版）', 58, 18, 1044, '', 2, 0],
        ['JJ871', '护手霜', '（60ml升级版）', 28, '', 0, '', '', 0]
    ];
    var rightRows = [
        ['JJ891', '日用卫生巾', '', '', 10, 0, 18.8, 1, 18.8],
        ['JJ892', '夜用卫生巾', '', '', 16, 0, 19.8, 1, 19.8],
        ['JJ893', '卫生护垫', '', '', 10, 0, 19.8, '', 0],
        ['JJ894', '卫生巾套装', '', '', '', 0, 398, '', 0],
        ['JJ810', '健齿牙膏', '（30克）', '', '', 0, 4.5, 2, 9],
        ['JJ859', '健齿牙膏', '（150克/支）', '', '', 0, 21, '', 0],
        ['JJ828', '牙膏套装新', '（150g*2）', '', 24, 0, 38, '', 0],
        ['JJ860', '清渍牙膏', '（120g）', '', '', 0, 28, '', 0],
        ['JJ862', '清渍健齿组合', '（120g+150g）', '', 2, 0, 45, 1, 45],
        '日用品系列',
        ['JJ849', '驱蚊液', '（80ml）', 15, 36, 540, 15, 2, 30],
        ['JJ850', '全效洗洁精', '（1L）', '', 12, 0, 45, 1, 45],
        ['JJ858', '洗手液', '（500ml）', '', 24, 0, 38, 1, 38],
        ['JJ851', '健肤浴液', '（200ml）', '', 5, 0, 19, 2, 38],
        ['JJ852', '健肤浴液', '（400ml）', '', 5, 0, 35, '', 0],
        ['JJ853', '健肤浴液', '（850ml）', '', '', 0, 75, '', 0],
        ['JJ854', '洗发露', '（中油220ml）', '', 18, 0, 28, '', 0],
        ['JJ855', '洗发露', '（中油400ml）', '', 16, 0, 48, 1, 48],
        ['JJ856', '洗发露', '（中干220ml）', '', 6, 0, 28, '', 0]
    ];

    var grid = 'h-[19px] p-0 pt-[2px] border-r border-b border-[#d0d7e5] leading-[16px] overflow-hidden ';
    var line = 'h-[19px] p-0 pt-[2px] border-b border-black leading-[16px] overflow-hidden ';

    function td(cls, text, span) {
        return '<td class="' + cls + '" colspan="' + (span || 1) + '">' + text + '</td>';
    }
    function rowHead(n) {
        var look = n === 2 ? 'bg-[#ffd58d] border-[#f29536]' : 'bg-[#e4ecf7] border-[#9eb6ce]';
        return '<th scope="row" class="p-0 border-r border-b align-bottom font-normal leading-[13px] text-[#27413e] overflow-hidden ' + look + '">' + n + '</th>';
    }
    // the inner edge of the left block is a double rule
    function edge(isLeft) {
        return isLeft ? 'border-r-[3px] border-r-black [border-right-style:double] ' : 'border-r border-r-black ';
    }
    // long names are set smaller so the note still fits in the column
    function nameSizes(row) {
        if (row[2] && row[1].length === 7) return ['text-[10px]', 'text-[7px]'];
        if (row[2] && row[1].length === 6) return ['text-[9px]', 'text-[8px]'];
        return ['text-[11px]', 'text-[9px]'];
    }
    function block(row, page, isLeft) {
        if (typeof row === 'string') {
            return td(line + edge(isLeft) + 'bg-[#ffcc00] text-center', row, 5);
        }
        var sizes = nameSizes(row);
        var name = '<div class="h-[16px] flex items-center"><span class="' + sizes[0] + '">' + row[1] + '</span>' +
            '<span class="' + sizes[1] + '">' + row[2] + '</span></div>';
        var v = row.slice(3 + page * 3, 6 + page * 3);
        return td(line + 'border-r text-center text-[9px]', row[0]) +
            td(line + 'border-r pl-[2px]', name) +
            td(line + 'border-r text-center text-[10px]', v[0]) +
            td(line + 'border-r text-center text-[10px]', v[1]) +
            td(line + edge(isLeft) + 'text-center text-[10px]', v[2]);
    }
    function both(fn) {
        return fn(0) + fn(1);
    }

    document.getElementById('cols').innerHTML = widths.map(function (w) {
        return '<col style="width:' + w + 'px">';
    }).join('') + '<col>';

    var head = '<th class="h-[15px] p-0 bg-[#a9c4e9] border-r border-b border-[#9eb6ce]"><svg class="ml-auto mr-[4px]" width="7" height="7"><path d="M7 0v7H0z" fill="#e4ecf7"/></svg></th>';
    'ABCDEFGHIJKLMNOPQRSTUVW'.split('').concat('').forEach(function (c) {
        var look = c === 'L' ? 'from-[#f9d99f] to-[#f1c15f] border-[#f29536]' : 'from-[#f6f9fc] to-[#d3dbe9] border-[#9eb6ce]';
        head += '<th class="h-[15px] p-0 pt-[2px] border-r border-b font-normal leading-[12px] text-[#27413e] bg-linear-to-b ' + look + '">' + c + '</th>';
    });
    document.getElementById('letters').innerHTML = head;

    var html = '<tr>' + rowHead(1) + both(function () {
        return td('h-[23px] p-0 pt-[4px] border-b border-[#d0d7e5] text-center font-bold text-[19px] leading-[18px]', '办单/出货单', 10);
    }) + '<td class="bg-[#a0a0a0]" colspan="4" rowspan="26"></td></tr>';
    html += '<tr>' + rowHead(2) + both(function () {
        return td(grid + 'border-r-transparent pl-[2px] font-bold text-[12px]', '编号：') +
            td(grid + 'pl-[2px] font-bold text-[12px]', 'V') + td(grid, '').repeat(8);
    }) + '</tr>';
    html += '<tr>' + rowHead(3) + both(function () {
        return td(grid + 'pl-[2px] font-bold text-[12px]', '<div class="grid grid-cols-[134px_183px_1fr]"><span>姓名：</span><span>手机：</span><span>身份证号码：</span></div>', 10);
    }) + '</tr>';
    html += '<tr>' + rowHead(4) + both(function () {
        return td(grid + 'pl-[2px] font-bold text-[12px]', '<div class="grid grid-cols-[132px_177px_97px_1fr]"><span>推荐人：</span><span>推荐人编号：</span><span>酬谢人：</span><span>酬谢人编号：</span></div>', 10);
    }) + '</tr>';
    html += '<tr>' + rowHead(5) + td('h-[19px] p-0 border-r border-r-[#d0d7e5] border-b-2 border-b-black', '').repeat(20) + '</tr>';
    html += '<tr>' + rowHead(6) + both(function () {
        var cls = 'h-[19px] p-0 pt-px leading-[16px] border-b-2 border-black bg-[#ffff00] text-center overflow-hidden ';
        return td(cls + 'border-r text-left pl-[2px]', '编号') + td(cls + 'border-r', '产品名称') + td(cls + 'border-r', '单价') + td(cls + 'border-r', '数量') + td(cls + edge(true), '金额') +
            td(cls + 'border-r', '编号') + td(cls + 'border-r', '产品名称') + td(cls + 'border-r', '单价') + td(cls + 'border-r', '数量') + td(cls + edge(false), '金额');
    }) + '</tr>';
    html += '<tr>' + rowHead(7) + both(function (page) {
        return block('保健食品', page, true) + block('特别护理系列', page, false);
    }) + '</tr>';
    leftRows.forEach(function (row, i) {
        html += '<tr>' + rowHead(i + 8);
        for (var page = 0; page < 2; page++) {
            html += block(row, page, true) + block(rightRows[i], page, false);
        }
        html += '</tr>';
    });
    document.getElementById('cells').innerHTML = html;
</script>
</body>
</html>
